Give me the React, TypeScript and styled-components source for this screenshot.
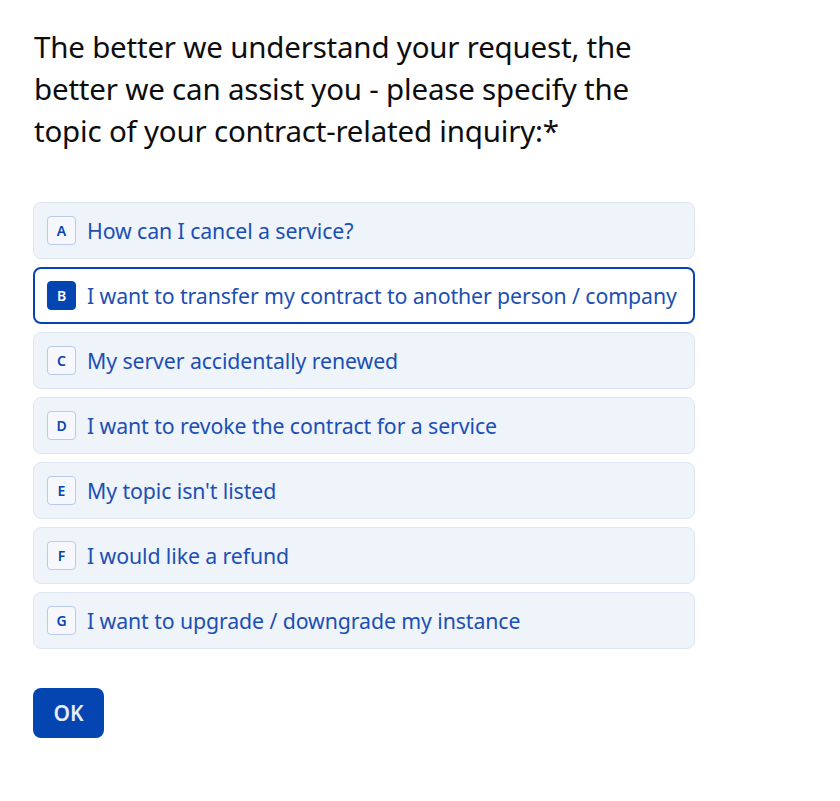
import React, { useState } from 'react'
import styled, { createGlobalStyle } from 'styled-components'

const GlobalStyle = createGlobalStyle`
  html, body {
    margin: 0;
    padding: 0;
    background: #ffffff;
  }
  body {
    font-family: 'Noto Sans', 'Open Sans', sans-serif;
    -webkit-font-smoothing: antialiased;
  }
`

const colors = {
  text: '#0d0d0d',
  brand: '#0545b1',
  optionText: '#1b4fb4',
  optionBg: '#eff3fa',
  optionBorder: '#dfe6f3',
  badgeBg: '#f6f8fd',
  badgeBorder: '#b9cbea',
}

const Page = styled.main`
  padding: 26px 33px 40px 33px;
  width: 662px;
`

const Question = styled.h1`
  margin: 0 0 50px 1px;
  font-size: 29.5px;
  font-weight: 400;
  line-height: 42px;
  color: ${colors.text};
  letter-spacing: -0.2px;
  width: 640px;
`

const Options = styled.div`
  display: flex;
  flex-direction: column;
  gap: 8px;
`

const Option = styled.button<{ $selected: boolean }>`
  display: flex;
  align-items: center;
  gap: 11px;
  height: 57px;
  width: 662px;
  padding: 0 13px;
  box-sizing: border-box;
  border-radius: 8px;
  border: ${p => (p.$selected ? `2px solid ${colors.brand}` : `1px solid ${colors.optionBorder}`)};
  padding-left: ${p => (p.$selected ? '12px' : '13px')};
  background: ${p => (p.$selected ? '#ffffff' : colors.optionBg)};
  font-family: inherit;
  cursor: pointer;
  text-align: left;
`

const Badge = styled.span<{ $selected: boolean }>`
  flex: 0 0 auto;
  display: flex;
  align-items: center;
  justify-content: center;
  width: 29px;
  height: 29px;
  box-sizing: border-box;
  border-radius: 4px;
  border: 1px solid ${p => (p.$selected ? colors.brand : colors.badgeBorder)};
  background: ${p => (p.$selected ? colors.brand : colors.badgeBg)};
  color: ${p => (p.$selected ? '#ffffff' : colors.brand)};
  font-size: 14px;
  font-weight: 600;
`

const Label = styled.span`
  font-size: 21.3px;
  color: ${colors.optionText};
  letter-spacing: -0.1px;
`

const OkButton = styled.button`
  margin-top: 39px;
  width: 71px;
  height: 50px;
  border: none;
  border-radius: 8px;
  background: ${colors.brand};
  color: #e6edf8;
  font-family: inherit;
  font-size: 21px;
  font-weight: 600;
  cursor: pointer;
`

const choices = [
  'How can I cancel a service?',
  'I want to transfer my contract to another person / company',
  'My server accidentally renewed',
  'I want to revoke the contract for a service',
  "My topic isn't listed",
  'I would like a refund',
  'I want to upgrade / downgrade my instance',
]

export default function App() {
  const [selected, setSelected] = useState(1)

  return (
    <>
      <GlobalStyle />
      <Page>
        <Question>
          The better we understand your request, the better we can assist you - please specify the topic
          of your contract-related inquiry:*
        </Question>
        <Options>
          {choices.map((c, i) => (
            <Option key={c} $selected={i === selected} onClick={() => setSelected(i)}>
              <Badge $selected={i === selected}>{String.fromCharCode(65 + i)}</Badge>
              <Label>{c}</Label>
            </Option>
          ))}
        </Options>
        <OkButton>OK</OkButton>
      </Page>
    </>
  )
}
